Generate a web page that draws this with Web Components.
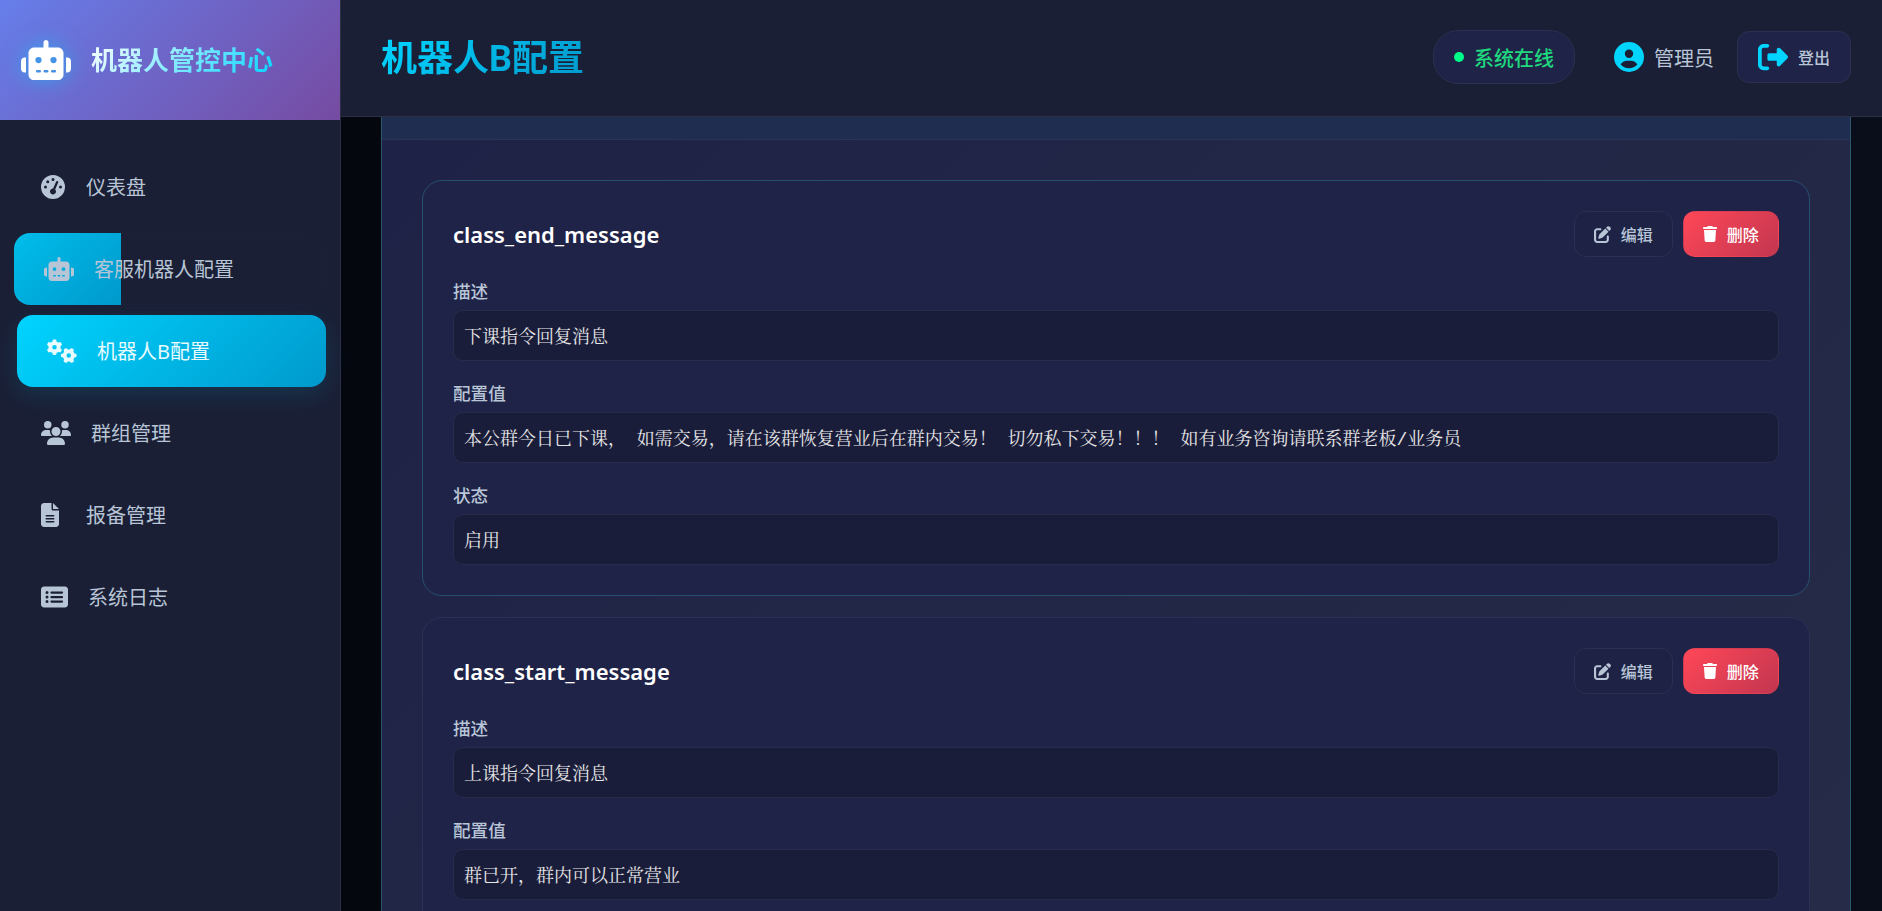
<!DOCTYPE html>
<html lang="zh-CN">
<head>
<meta charset="utf-8">
<title>机器人B配置</title>
<style>
    html, body { margin: 0; height: 100%; }
    body {
        height: 911px;
        overflow: hidden;
        display: flex;
        background: #0a0e1a;
        color: #e6e6e6;
        font-family: "Noto Sans", "Noto Sans CJK SC", sans-serif;
    }
</style>
</head>
<body>
<side-bar>
    <side-brand>机器人管控中心</side-brand>
    <nav-item icon="gauge">仪表盘</nav-item>
    <nav-item icon="robot" state="hover">客服机器人配置</nav-item>
    <nav-item icon="gears" state="active">机器人B配置</nav-item>
    <nav-item icon="users">群组管理</nav-item>
    <nav-item icon="file">报备管理</nav-item>
    <nav-item icon="list">系统日志</nav-item>
</side-bar>
<main-area>
    <top-bar title="机器人B配置">
        <status-pill>系统在线</status-pill>
        <user-chip>管理员</user-chip>
        <logout-button>登出</logout-button>
    </top-bar>
    <config-panel>
        <config-card name="class_end_message" highlight>
            <config-field label="描述">下课指令回复消息</config-field>
            <config-field label="配置值">本公群今日已下课， 如需交易，请在该群恢复营业后在群内交易！ 切勿私下交易！！！ 如有业务咨询请联系群老板/业务员</config-field>
            <config-field label="状态">启用</config-field>
        </config-card>
        <config-card name="class_start_message">
            <config-field label="描述">上课指令回复消息</config-field>
            <config-field label="配置值">群已开，群内可以正常营业</config-field>
            <config-field label="状态">启用</config-field>
        </config-card>
    </config-panel>
</main-area>

<script>
// Icon shapes, each with its own viewBox width (height is always 512)
const ICONS = {
    gauge: [512, 'M0 256a256 256 0 1 1 512 0A256 256 0 1 1 0 256zM288 96a32 32 0 1 0 -64 0 32 32 0 1 0 64 0zM256 416c35.3 0 64-28.7 64-64c0-17.4-6.9-33.1-18.1-44.6L366 161.7c5.3-12.1-.2-26.3-12.3-31.6s-26.3 .2-31.6 12.3L257.9 288c-.6 0-1.3 0-1.9 0c-35.3 0-64 28.7-64 64s28.7 64 64 64zM176 144a32 32 0 1 0 -64 0 32 32 0 1 0 64 0zM96 288a32 32 0 1 0 0-64 32 32 0 1 0 0 64zm352-32a32 32 0 1 0 -64 0 32 32 0 1 0 64 0z'],
    robot: [640, 'M320 0c17.7 0 32 14.3 32 32V96H472c39.8 0 72 32.2 72 72V440c0 39.8-32.2 72-72 72H168c-39.8 0-72-32.2-72-72V168c0-39.8 32.2-72 72-72H288V32c0-17.7 14.3-32 32-32zM208 384c-8.8 0-16 7.2-16 16s7.2 16 16 16h32c8.8 0 16-7.2 16-16s-7.2-16-16-16H208zm96 0c-8.8 0-16 7.2-16 16s7.2 16 16 16h32c8.8 0 16-7.2 16-16s-7.2-16-16-16H304zm96 0c-8.8 0-16 7.2-16 16s7.2 16 16 16h32c8.8 0 16-7.2 16-16s-7.2-16-16-16H400zM264 256a40 40 0 1 0 -80 0 40 40 0 1 0 80 0zm152 40a40 40 0 1 0 0-80 40 40 0 1 0 0 80zM48 224H64V416H48c-26.5 0-48-21.5-48-48V272c0-26.5 21.5-48 48-48zm544 0c26.5 0 48 21.5 48 48v96c0 26.5-21.5 48-48 48H576V224h16z'],
    gears: [640, 'M308.5 135.3c7.1-6.3 9.9-16.2 6.2-25c-2.3-5.3-4.8-10.5-7.6-15.5L304 89.4c-3-5-6.3-9.9-9.8-14.6c-5.7-7.6-15.7-10.1-24.7-7.1l-28.2 9.3c-10.7-8.8-23-16-36.2-20.9L199 27.1c-1.9-9.3-9.1-16.7-18.5-17.8C173.9 8.4 167.2 8 160.4 8h-.7c-6.8 0-13.5 .4-20.1 1.2c-9.4 1.1-16.6 8.6-18.5 17.8L115 56.1c-13.3 5-25.5 12.1-36.2 20.9L50.5 67.8c-9-3-19-.5-24.7 7.1c-3.5 4.7-6.8 9.6-9.9 14.6l-3 5.3c-2.8 5-5.3 10.2-7.6 15.6c-3.7 8.7-.9 18.6 6.2 25l22.2 19.8C32.6 161.9 32 168.9 32 176s.6 14.1 1.7 20.9L11.5 216.7c-7.1 6.3-9.9 16.2-6.2 25c2.3 5.3 4.8 10.5 7.6 15.6l3 5.2c3 5.1 6.3 9.9 9.9 14.6c5.7 7.6 15.7 10.1 24.7 7.1l28.2-9.3c10.7 8.8 23 16 36.2 20.9l6.1 29.1c1.9 9.3 9.1 16.7 18.5 17.8c6.7 .8 13.5 1.2 20.4 1.2s13.7-.4 20.4-1.2c9.4-1.1 16.6-8.6 18.5-17.8l6.1-29.1c13.3-5 25.5-12.1 36.2-20.9l28.2 9.3c9 3 19 .5 24.7-7.1c3.5-4.7 6.8-9.5 9.8-14.6l3.1-5.4c2.8-5 5.3-10.2 7.6-15.5c3.7-8.7 .9-18.6-6.2-25l-22.2-19.8c1.1-6.8 1.7-13.8 1.7-20.9s-.6-14.1-1.7-20.9l22.2-19.8zM112 176a48 48 0 1 1 96 0 48 48 0 1 1 -96 0zM504.7 500.5c6.3 7.1 16.2 9.9 25 6.2c5.3-2.3 10.5-4.8 15.5-7.6l5.4-3.1c5-3 9.9-6.3 14.6-9.8c7.6-5.7 10.1-15.7 7.1-24.7l-9.3-28.2c8.8-10.7 16-23 20.9-36.2l29.1-6.1c9.3-1.9 16.7-9.1 17.8-18.5c.8-6.7 1.2-13.5 1.2-20.4s-.4-13.7-1.2-20.4c-1.1-9.4-8.6-16.6-17.8-18.5L583.9 307c-5-13.3-12.1-25.5-20.9-36.2l9.3-28.2c3-9 .5-19-7.1-24.7c-4.7-3.5-9.6-6.8-14.6-9.9l-5.3-3c-5-2.8-10.2-5.3-15.6-7.6c-8.7-3.7-18.6-.9-25 6.2l-19.8 22.2c-6.8-1.1-13.8-1.7-20.9-1.7s-14.1 .6-20.9 1.7l-19.8-22.2c-6.3-7.1-16.2-9.9-25-6.2c-5.3 2.3-10.5 4.8-15.6 7.6l-5.2 3c-5.1 3-9.9 6.3-14.6 9.9c-7.6 5.7-10.1 15.7-7.1 24.7l9.3 28.2c-8.8 10.7-16 23-20.9 36.2L315.1 313c-9.3 1.9-16.7 9.1-17.8 18.5c-.8 6.7-1.2 13.5-1.2 20.4s.4 13.7 1.2 20.4c1.1 9.4 8.6 16.6 17.8 18.5l29.1 6.1c5 13.3 12.1 25.5 20.9 36.2l-9.3 28.2c-3 9-.5 19 7.1 24.7c4.7 3.5 9.5 6.8 14.6 9.8l5.4 3.1c5 2.8 10.2 5.3 15.5 7.6c8.7 3.7 18.6 .9 25-6.2l19.8-22.2c6.8 1.1 13.8 1.7 20.9 1.7s14.1-.6 20.9-1.7l19.8 22.2zM464 304a48 48 0 1 1 0 96 48 48 0 1 1 0-96z'],
    users: [640, 'M144 0a80 80 0 1 1 0 160A80 80 0 1 1 144 0zM512 0a80 80 0 1 1 0 160A80 80 0 1 1 512 0zM0 298.7C0 239.8 47.8 192 106.7 192h42.7c15.9 0 31 3.5 44.6 9.7c-1.3 7.2-1.9 14.7-1.9 22.3c0 38.2 16.8 72.5 43.3 96c-.2 0-.4 0-.7 0H21.3C9.6 320 0 310.4 0 298.7zM405.3 320c-.2 0-.4 0-.7 0c26.6-23.5 43.3-57.8 43.3-96c0-7.6-.7-15-1.9-22.3c13.6-6.3 28.7-9.7 44.6-9.7h42.7C592.2 192 640 239.8 640 298.7c0 11.8-9.6 21.3-21.3 21.3H405.3zM224 224a96 96 0 1 1 192 0 96 96 0 1 1 -192 0zM128 485.3C128 411.7 187.7 352 261.3 352H378.7C452.3 352 512 411.7 512 485.3c0 14.7-11.9 26.7-26.7 26.7H154.7c-14.7 0-26.7-11.9-26.7-26.7z'],
    file: [384, 'M64 0C28.7 0 0 28.7 0 64V448c0 35.3 28.7 64 64 64H320c35.3 0 64-28.7 64-64V160H256c-17.7 0-32-14.3-32-32V0H64zM256 0V128H384L256 0zM112 256H272c8.8 0 16 7.2 16 16s-7.2 16-16 16H112c-8.8 0-16-7.2-16-16s7.2-16 16-16zm0 64H272c8.8 0 16 7.2 16 16s-7.2 16-16 16H112c-8.8 0-16-7.2-16-16s7.2-16 16-16zm0 64H272c8.8 0 16 7.2 16 16s-7.2 16-16 16H112c-8.8 0-16-7.2-16-16s7.2-16 16-16z'],
    list: [576, 'M0 96C0 60.7 28.7 32 64 32H512c35.3 0 64 28.7 64 64V416c0 35.3-28.7 64-64 64H64c-35.3 0-64-28.7-64-64V96zM128 288a32 32 0 1 0 0-64 32 32 0 1 0 0 64zm32-128a32 32 0 1 0 -64 0 32 32 0 1 0 64 0zM128 384a32 32 0 1 0 0-64 32 32 0 1 0 0 64zm96-248c-13.3 0-24 10.7-24 24s10.7 24 24 24H448c13.3 0 24-10.7 24-24s-10.7-24-24-24H224zm0 96c-13.3 0-24 10.7-24 24s10.7 24 24 24H448c13.3 0 24-10.7 24-24s-10.7-24-24-24H224zm0 96c-13.3 0-24 10.7-24 24s10.7 24 24 24H448c13.3 0 24-10.7 24-24s-10.7-24-24-24H224z'],
    user: [512, 'M399 384.2C376.9 345.8 335.4 320 288 320H224c-47.4 0-88.9 25.8-111 64.2c35.2 39.2 86.2 63.8 143 63.8s107.8-24.7 143-63.8zM0 256a256 256 0 1 1 512 0A256 256 0 1 1 0 256zm256 16a72 72 0 1 0 0-144 72 72 0 1 0 0 144z'],
    logout: [512, 'M377.9 105.9L500.7 228.7c7.2 7.2 11.3 17.1 11.3 27.3s-4.1 20.1-11.3 27.3L377.9 406.1c-6.4 6.4-15 9.9-24 9.9c-18.7 0-33.9-15.2-33.9-33.9l0-62.1-128 0c-17.7 0-32-14.3-32-32l0-64c0-17.7 14.3-32 32-32l128 0 0-62.1c0-18.7 15.2-33.9 33.9-33.9c9 0 17.6 3.6 24 9.9zM160 96L96 96c-17.7 0-32 14.3-32 32l0 256c0 17.7 14.3 32 32 32l64 0c17.7 0 32 14.3 32 32s-14.3 32-32 32l-64 0c-53 0-96-43-96-96L0 128C0 75 43 32 96 32l64 0c17.7 0 32 14.3 32 32s-14.3 32-32 32z'],
    edit: [512, 'M471.6 21.7c-21.9-21.9-57.3-21.9-79.2 0L362.3 51.7l97.9 97.9 30.1-30.1c21.9-21.9 21.9-57.3 0-79.2L471.6 21.7zm-299.2 220c-6.1 6.1-10.8 13.6-13.5 21.9l-29.6 88.8c-2.9 8.6-.6 18.1 5.8 24.6s15.9 8.7 24.6 5.8l88.8-29.6c8.2-2.7 15.7-7.4 21.9-13.5L437.7 172.3 339.7 74.3 172.4 241.7zM96 64C43 64 0 107 0 160V416c0 53 43 96 96 96H352c53 0 96-43 96-96V320c0-17.7-14.3-32-32-32s-32 14.3-32 32v96c0 17.7-14.3 32-32 32H96c-17.7 0-32-14.3-32-32V160c0-17.7 14.3-32 32-32h96c17.7 0 32-14.3 32-32s-14.3-32-32-32H96z'],
    trash: [448, 'M135.2 17.7L128 32H32C14.3 32 0 46.3 0 64S14.3 96 32 96H416c17.7 0 32-14.3 32-32s-14.3-32-32-32H320l-7.2-14.3C307.4 6.8 296.3 0 284.2 0H163.8c-12.1 0-23.2 6.8-28.6 17.7zM416 128H32L53.2 467c1.6 25.3 22.6 45 47.9 45H346.9c25.3 0 46.3-19.7 47.9-45L416 128z']
};

// Small base class: stamps the html into an open shadow root
class ShadowEl extends HTMLElement {
    constructor() {
        super();
        this.attachShadow({ mode: 'open' });
    }
    connectedCallback() {
        this.shadowRoot.innerHTML = this.render();
    }
}

class FaIcon extends ShadowEl {
    render() {
        const [w, d] = ICONS[this.getAttribute('name')];
        const size = Number(this.getAttribute('size') || 16);
        return `
            <style>
                :host { display: inline-flex; flex: none; }
                svg { display: block; fill: currentColor; }
            </style>
            <svg viewBox="0 0 ${w} 512" width="${size * w / 512}" height="${size}"><path d="${d}"/></svg>
        `;
    }
}

class SideBar extends ShadowEl {
    render() {
        return `
            <style>
                :host {
                    display: block;
                    flex: none;
                    box-sizing: border-box;
                    width: 341px;
                    height: 911px;
                    background: #1a1f35;
                    border-right: 1px solid #2b3044;
                }
                .nav {
                    display: flex;
                    flex-direction: column;
                    gap: 10px;
                    padding: 31px 20px 0 11px;
                }
            </style>
            <slot name="brand"></slot>
            <div class="nav"><slot></slot></div>
        `;
    }
}

class SideBrand extends ShadowEl {
    render() {
        return `
            <style>
                :host {
                    display: flex;
                    align-items: center;
                    gap: 20px;
                    box-sizing: border-box;
                    height: 120px;
                    width: 340px;
                    padding-left: 21px;
                    background: linear-gradient(135deg, #667eea 0%, #764ba2 100%);
                }
                fa-icon {
                    color: #fff;
                    filter: drop-shadow(0 0 10px rgba(0, 212, 255, .5));
                }
                .name {
                    font-size: 26px;
                    font-weight: 700;
                    line-height: 40px;
                    background: linear-gradient(135deg, #fff, #00d4ff);
                    -webkit-background-clip: text;
                    background-clip: text;
                    color: transparent;
                }
            </style>
            <fa-icon name="robot" size="40"></fa-icon>
            <span class="name"><slot></slot></span>
        `;
    }
}

class NavItem extends ShadowEl {
    render() {
        const state = this.getAttribute('state') || '';
        return `
            <style>
                :host {
                    display: block;
                    position: relative;
                    box-sizing: border-box;
                    height: 72px;
                    border-radius: 16px;
                    color: #b8c5d6;
                    font-size: 20px;
                }
                :host([state="hover"]) {
                    transform: translateX(3px);
                    overflow: hidden;
                    box-shadow: inset 0 0 0 1px rgba(255, 255, 255, .012);
                }
                :host([state="active"]) {
                    transform: translateX(6px);
                    color: #e8fbff;
                    background: linear-gradient(135deg, #00d4ff 0%, #0099cc 100%);
                    box-shadow: 0 8px 25px rgba(0, 212, 255, .12);
                }
                /* the sweep that is caught half way on the hovered row */
                .sweep {
                    position: absolute;
                    left: 0;
                    top: 0;
                    bottom: 0;
                    width: 107px;
                    background: linear-gradient(135deg, #00bdea 0%, #0099cc 100%);
                }
                .row {
                    position: relative;
                    display: flex;
                    align-items: center;
                    height: 100%;
                    padding-left: 30px;
                }
                .ic { min-width: 25px; margin-right: 20px; display: flex; }
                .label { line-height: 28px; padding-top: 2px; }
            </style>
            ${state === 'hover' ? '<div class="sweep"></div>' : ''}
            <div class="row">
                <span class="ic"><fa-icon name="${this.getAttribute('icon')}" size="24"></fa-icon></span>
                <span class="label"><slot></slot></span>
            </div>
        `;
    }
}

class MainArea extends ShadowEl {
    render() {
        return `
            <style>
                :host {
                    display: flex;
                    flex-direction: column;
                    flex: 1;
                    min-width: 0;
                    height: 911px;
                    background: linear-gradient(90deg, #05070f 0%, #0a0e1a 100%);
                }
            </style>
            <slot></slot>
        `;
    }
}

class TopBar extends ShadowEl {
    render() {
        return `
            <style>
                :host {
                    display: flex;
                    align-items: center;
                    flex: none;
                    box-sizing: border-box;
                    height: 117px;
                    padding: 0 31px 2px 40px;
                    background: #1a1f35;
                    border-bottom: 1px solid #2b3044;
                }
                h1 {
                    flex: 1;
                    margin: 3px 0 0;
                    font-family: Roboto, "Noto Sans CJK SC", sans-serif;
                    font-size: 36px;
                    font-weight: 700;
                    line-height: 50px;
                }
                h1 span {
                    background: linear-gradient(135deg, #00d4ff 0%, #0099cc 100%);
                    -webkit-background-clip: text;
                    background-clip: text;
                    color: transparent;
                }
                .tools { display: flex; align-items: center; }
            </style>
            <h1><span>${this.getAttribute('title')}</span></h1>
            <div class="tools"><slot></slot></div>
        `;
    }
}

class StatusPill extends ShadowEl {
    render() {
        return `
            <style>
                :host {
                    display: inline-flex;
                    align-items: center;
                    box-sizing: border-box;
                    height: 54px;
                    width: 142px;
                    padding-left: 20px;
                    margin-right: 39px;
                    border-radius: 25px;
                    border: 1px solid #2b3050;
                    background: #1f2347;
                    color: #1fd87f;
                    font-size: 20px;
                    font-weight: 500;
                }
                i {
                    width: 10px;
                    height: 10px;
                    margin-right: 10px;
                    border-radius: 50%;
                    background: #00ff88;
                }
            </style>
            <i></i><slot></slot>
        `;
    }
}

class UserChip extends ShadowEl {
    render() {
        return `
            <style>
                :host {
                    display: inline-flex;
                    align-items: center;
                    gap: 10px;
                    margin-right: 23px;
                    color: #b8c5d6;
                    font-size: 20px;
                }
                fa-icon { color: #00d4ff; }
            </style>
            <fa-icon name="user" size="30"></fa-icon><slot></slot>
        `;
    }
}

class LogoutButton extends ShadowEl {
    render() {
        return `
            <style>
                :host {
                    display: inline-flex;
                    align-items: center;
                    gap: 10px;
                    box-sizing: border-box;
                    height: 52px;
                    padding: 0 20px;
                    border-radius: 12px;
                    border: 1px solid #2b3050;
                    background: #1f2347;
                    color: #b8c5d6;
                    font-size: 16px;
                    font-weight: 500;
                }
                fa-icon { color: #00d4ff; }
            </style>
            <fa-icon name="logout" size="30"></fa-icon><slot></slot>
        `;
    }
}

class ConfigPanel extends ShadowEl {
    render() {
        return `
            <style>
                :host {
                    display: block;
                    flex: 1;
                    min-height: 0;
                    overflow: hidden;
                    box-sizing: border-box;
                    margin: 0 31px 0 40px;
                    border-left: 1px solid #2a5670;
                    border-right: 1px solid #2a5670;
                    background: linear-gradient(135deg, #1e2246 0%, #262b47 100%);
                }
                .strip {
                    height: 22px;
                    background: #1f2d50;
                    border-bottom: 1px solid #2a3454;
                }
                .list {
                    display: flex;
                    flex-direction: column;
                    gap: 21px;
                    padding: 40px 40px 0;
                }
            </style>
            <div class="strip"></div>
            <div class="list"><slot></slot></div>
        `;
    }
}

class ConfigCard extends ShadowEl {
    render() {
        return `
            <style>
                :host {
                    display: block;
                    box-sizing: border-box;
                    padding: 30px;
                    border-radius: 20px;
                    border: 1px solid #2a3154;
                    background: #1f2347;
                }
                :host([highlight]) { border-color: #25506f; }
                .head {
                    display: flex;
                    align-items: center;
                    justify-content: space-between;
                    margin-bottom: 20px;
                }
                h3 {
                    margin: 0;
                    color: #fff;
                    font-size: 22px;
                    font-weight: 600;
                    font-family: "Noto Sans", "Noto Sans CJK SC", sans-serif;
                }
                .acts { display: flex; gap: 10px; }
            </style>
            <div class="head">
                <h3>${this.getAttribute('name')}</h3>
                <div class="acts">
                    <act-button icon="edit" isize="17">编辑</act-button>
                    <act-button icon="trash" isize="16" kind="danger">删除</act-button>
                </div>
            </div>
            <slot></slot>
        `;
    }
}

class ActButton extends ShadowEl {
    render() {
        return `
            <style>
                :host {
                    display: inline-flex;
                    align-items: center;
                    gap: 9.6px;
                    box-sizing: border-box;
                    height: 46px;
                    padding: 0 19.2px;
                    border-radius: 12px;
                    border: 1px solid #2a3050;
                    background: #1e2244;
                    color: #b8c5d6;
                    font-size: 16px;
                    font-weight: 500;
                }
                :host([kind="danger"]) {
                    color: #fff;
                    border-color: transparent;
                    background: linear-gradient(135deg, #ff4757 0%, #c23650 100%);
                }
            </style>
            <fa-icon name="${this.getAttribute('icon')}" size="${this.getAttribute('isize')}"></fa-icon><slot></slot>
        `;
    }
}

class ConfigField extends ShadowEl {
    render() {
        return `
            <style>
                :host { display: block; margin-bottom: 18px; }
                :host(:last-child) { margin-bottom: 0; }
                label {
                    display: block;
                    margin-bottom: 5px;
                    padding-top: 1px;
                    color: #b8c5d6;
                    font-size: 17.6px;
                    font-weight: 500;
                    line-height: 27px;
                }
                .box {
                    box-sizing: border-box;
                    height: 51px;
                    display: flex;
                    align-items: center;
                    padding: 0 10px 2px;
                    border-radius: 10px;
                    border: 1px solid #272c4a;
                    background: #1a1d3a;
                    color: #e6e6e6;
                    font-size: 18px;
                    font-family: "Liberation Mono", "Noto Serif CJK SC", monospace;
                    white-space: pre;
                }
            </style>
            <label>${this.getAttribute('label')}</label>
            <div class="box"><slot></slot></div>
        `;
    }
}

window.customElements.define('fa-icon', FaIcon);
window.customElements.define('side-bar', SideBar);
window.customElements.define('side-brand', SideBrand);
window.customElements.define('nav-item', NavItem);
window.customElements.define('main-area', MainArea);
window.customElements.define('top-bar', TopBar);
window.customElements.define('status-pill', StatusPill);
window.customElements.define('user-chip', UserChip);
window.customElements.define('logout-button', LogoutButton);
window.customElements.define('config-panel', ConfigPanel);
window.customElements.define('config-card', ConfigCard);
window.customElements.define('act-button', ActButton);
window.customElements.define('config-field', ConfigField);

// brand goes in the sidebar's named slot
document.querySelector('side-brand').slot = 'brand';
</script>
</body>
</html>
